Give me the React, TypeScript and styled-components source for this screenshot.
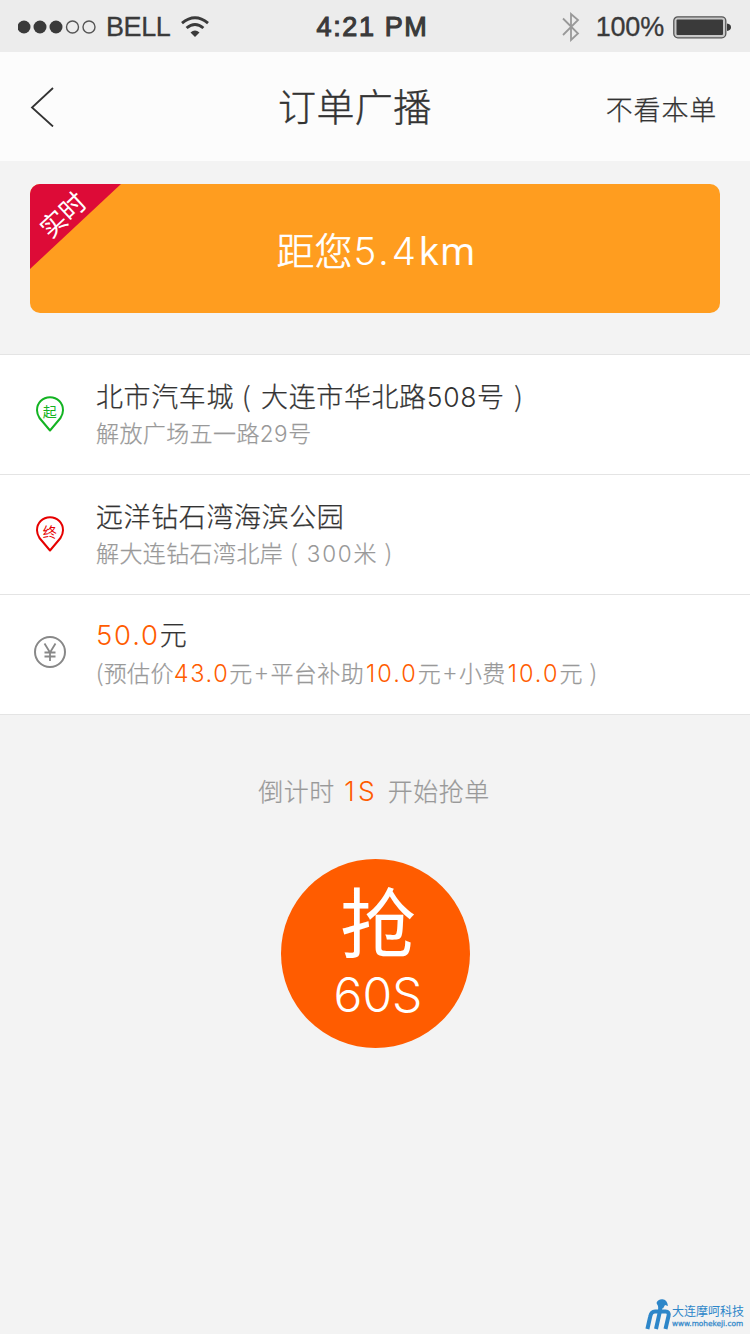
import React from "react";
import styled, { createGlobalStyle } from "styled-components";

const GlobalStyle = createGlobalStyle`
  * { box-sizing: border-box; }
  body { margin: 0; background: #f3f3f3; font-family: "Noto Sans CJK SC", sans-serif; color: #333; }
`;

const Screen = styled.div`
  width: 750px;
  height: 1334px;
  display: flex;
  flex-direction: column;
  background: #f3f3f3;
  overflow: hidden;
  white-space: nowrap;
`;

const StatusBar = styled.div`
  height: 52px;
  flex: none;
  background: #ececec;
  display: grid;
  grid-template-columns: 1fr auto 1fr;
  align-items: center;
  padding: 2px 19px 0 18px;
  font-family: "Liberation Sans", sans-serif;
  color: #3a3a3a;
`;

const StatusGroup = styled.div<{ $end?: boolean }>`
  display: flex;
  align-items: center;
  justify-content: ${(p) => (p.$end ? "flex-end" : "flex-start")};
`;

const StatusText = styled.span<{ $bold?: boolean; $spacing?: number }>`
  font-size: 27px;
  line-height: 32px;
  letter-spacing: ${(p) => p.$spacing ?? 0}px;
  padding-right: ${(p) => (p.$bold ? 4 : 0)}px;
  -webkit-text-stroke: ${(p) => (p.$bold ? 1.1 : 0.3)}px #3a3a3a;
`;

const Spacer = styled.span<{ $w: number }>`
  flex: none;
  width: ${(p) => p.$w}px;
`;

const NavBar = styled.header`
  height: 109px;
  flex: none;
  background: #fcfcfc;
  display: grid;
  grid-template-columns: 248px 1fr auto;
  align-items: center;
  padding: 0 33px 0 30px;
`;

const BackButton = styled.button`
  border: 0;
  padding: 0;
  background: none;
  display: flex;
  justify-self: start;
`;

const Title = styled.h1`
  margin: 0;
  padding-bottom: 4px;
  font-size: 38px;
  font-weight: 300;
  letter-spacing: 0.4px;
  line-height: 56px;
  -webkit-text-stroke: 0.4px currentColor;
`;

const SkipButton = styled.button`
  border: 0;
  padding: 4px 0 0;
  background: none;
  justify-self: end;
  font: 300 27px/40px "Noto Sans CJK SC", sans-serif;
  letter-spacing: 0.8px;
  color: #333;
  -webkit-text-stroke: 0.25px currentColor;
`;

const Banner = styled.section`
  position: relative;
  height: 129px;
  flex: none;
  margin: 23px 30px 41px;
  padding-left: 3px;
  border-radius: 10px;
  background: #ff9d1f;
  color: #fff;
  overflow: hidden;
  display: flex;
  align-items: center;
  justify-content: center;
  font-size: 38px;
  font-weight: 300;
`;

const Distance = styled.span`
  -webkit-text-stroke: 0.6px currentColor;
`;

const Unit = styled.span`
  font-family: "Open Sans", sans-serif;
  font-weight: 400;
  letter-spacing: 1.3px;
  -webkit-text-stroke: 0.2px currentColor;
`;

const Ribbon = styled.div`
  position: absolute;
  left: 0;
  top: 0;
  width: 91px;
  height: 85px;
  &::before {
    content: "";
    display: block;
    height: 100%;
    background: #dd0b37;
    clip-path: polygon(0 0, 100% 0, 0 100%);
  }
`;

const RibbonText = styled.span`
  position: absolute;
  left: 5px;
  top: 11px;
  width: 54px;
  text-align: center;
  font-size: 26px;
  font-weight: 400;
  line-height: 38px;
  transform: rotate(-43deg);
`;

const Num = styled.span<{ $size: number; $spacing?: number; $accent?: boolean; $lead?: number }>`
  font-family: Inter, sans-serif;
  font-weight: 300;
  font-size: ${(p) => p.$size}px;
  letter-spacing: ${(p) => p.$spacing ?? 0}px;
  padding-left: ${(p) => p.$lead ?? 0}px;
  -webkit-text-stroke: 0;
  ${(p) => p.$accent && "color: #ff5c00;"}
`;

const InfoList = styled.section`
  flex: none;
  border-top: 1px solid #e4e4e4;
  background: #fff;
`;

const InfoRow = styled.div`
  height: 120px;
  display: flex;
  border-bottom: 1px solid #e4e4e4;
`;

const IconCell = styled.div`
  width: 96px;
  flex: none;
  padding: 41px 0 0 34px;
`;

const Lines = styled.div<{ $loose?: boolean }>`
  display: flex;
  flex-direction: column;
  gap: ${(p) => (p.$loose ? 3 : 1)}px;
  padding-top: ${(p) => (p.$loose ? 19 : 21)}px;
`;

const Primary = styled.div`
  font-size: 27px;
  line-height: 40px;
  height: 38px;
  font-weight: 300;
  letter-spacing: 0.6px;
  -webkit-text-stroke: 0.25px currentColor;
`;

const Secondary = styled.div`
  font-size: 23px;
  line-height: 34px;
  height: 34px;
  font-weight: 300;
  letter-spacing: 0.4px;
  color: #999;
  -webkit-text-stroke: 0.25px currentColor;
`;

const Gap = styled.span<{ $l: number; $r: number }>`
  padding: 0 ${(p) => p.$r}px 0 ${(p) => p.$l}px;
`;

const Countdown = styled.p`
  margin: 56px 0 0;
  padding-right: 2px;
  height: 38px;
  line-height: 38px;
  flex: none;
  display: flex;
  justify-content: center;
  align-items: baseline;
  gap: 9.5px;
  font-size: 25px;
  font-weight: 300;
  letter-spacing: 0.5px;
  color: #999;
  -webkit-text-stroke: 0.2px currentColor;
`;

const GrabButton = styled.button`
  width: 189px;
  height: 189px;
  flex: none;
  margin: 50px 0 0 281px;
  padding: 20px 0 0 5px;
  border: 0;
  border-radius: 50%;
  background: #ff5c00;
  color: #fff;
  display: flex;
  flex-direction: column;
  align-items: center;
  justify-content: flex-start;
`;

const GrabLabel = styled.span`
  font: 400 76px/80px "Noto Sans CJK SC", sans-serif;
`;

const GrabSeconds = styled.span`
  font: 300 48px/58px Inter, sans-serif;
  padding-top: 7px;
`;

const Footer = styled.footer`
  margin-top: auto;
  display: flex;
  justify-content: flex-end;
  padding: 0 6px 4px 0;
  color: #2d86c9;
`;

const Brand = styled.div`
  display: flex;
  flex-direction: column;
  padding-top: 4px;
`;

const BrandName = styled.span`
  font-size: 12px;
  line-height: 16px;
`;

const BrandUrl = styled.span`
  font: 400 7.35px/9px "DejaVu Sans", sans-serif;
  -webkit-text-stroke: 0.25px currentColor;
`;

function SignalDots() {
  return (
    <svg width="88" height="16" viewBox="0 0 88 16">
      {[6, 22, 38].map((x) => <circle key={x} cx={x} cy="8" r="6.5" fill="#3a3a3a" />)}
      {[54.5, 71].map((x) => <circle key={x} cx={x} cy="8" r="6" fill="none" stroke="#555" strokeWidth="1.4" />)}
    </svg>
  );
}

function Wifi() {
  return (
    <svg width="28" height="22" viewBox="0 0 28 22" fill="none" stroke="#3a3a3a" strokeWidth="2.9">
      <path d="M1 7.2Q14-3.6 27 7.2" />
      <path d="M5.6 12Q14 4.8 22.4 12" />
      <path d="M9.5 16.5Q14 12.3 18.5 16.5L14 21Z" fill="#3a3a3a" stroke="none" />
    </svg>
  );
}

function Bluetooth() {
  return (
    <svg width="18" height="30" viewBox="0 0 18 30" fill="none" stroke="#999" strokeWidth="1.8">
      <path d="M1 6.5L16 21.5L9 28V2L16 8L1 23" />
    </svg>
  );
}

function Battery() {
  return (
    <svg width="58" height="23" viewBox="0 0 58 23">
      <rect x=".8" y=".8" width="52" height="21" rx="4" fill="#c8c8c8" stroke="#555" strokeWidth="1.3" />
      <rect x="3.5" y="3.5" width="46.5" height="15.5" rx="1" fill="#3a3a3a" />
      <path d="M54 7.5Q58 8 58 11.3T54 15Z" fill="#3a3a3a" />
    </svg>
  );
}

function Pin({ color, label }: { color: string; label: string }) {
  return (
    <svg width="32" height="38" viewBox="0 0 32 38">
      <path d="M16 34.5L5.5 22C4 19.5 3 17 3 14.2C3 7 8.5 1.2 16 1.2S29 7 29 14.2C29 17 28 19.5 26.5 22Z" fill="none" stroke={color} strokeWidth="2" strokeLinejoin="round" />
      <text x="15.8" y="21.3" textAnchor="middle" fontSize="14" fill={color}>{label}</text>
    </svg>
  );
}

function YuanIcon() {
  return (
    <svg width="32" height="32" viewBox="0 0 32 32" fill="none" stroke="#888">
      <circle cx="16" cy="16" r="15" strokeWidth="2" />
      <path d="M10.5 7.5L16 16.5L21.5 7.5M16 16V25M10.5 16.5H21.5M10.5 20.5H21.5" strokeWidth="1.8" />
    </svg>
  );
}

function BrandLogo() {
  return (
    <svg width="27" height="31" viewBox="0 0 27 31" fill="none" stroke="#2d86c9" strokeWidth="4">
      <path d="M2.4 30L5.2 17.5Q6.200 12.500 10 12.500H20.500Q24.500 12.500 23.500 17L20.500 30" />
      <path d="M11 30L15 12Q15.500 8 15 5" />
      <path d="M11.500 4Q13 0 17.500 0.300Q22 0.500 23 7L20 6L18 9.500L14 9Z" fill="#2d86c9" stroke="none" />
    </svg>
  );
}

export default function App() {
  return (
    <>
      <GlobalStyle />
      <Screen>
        <StatusBar>
          <StatusGroup>
            <SignalDots />
            <StatusText $spacing={-0.4}>BELL</StatusText>
            <Spacer $w={11} />
            <Wifi />
          </StatusGroup>
          <StatusText $bold $spacing={1.6}>4:21 PM</StatusText>
          <StatusGroup $end>
            <Bluetooth />
            <Spacer $w={16} />
            <StatusText $spacing={-0.2}>100%</StatusText>
            <Spacer $w={9} />
            <Battery />
          </StatusGroup>
        </StatusBar>

        <NavBar>
          <BackButton aria-label="返回">
            <svg width="25" height="40" viewBox="0 0 25 40" fill="none" stroke="#333" strokeWidth="1.8">
              <path d="M23 1L2 20.5L23 39.5" />
            </svg>
          </BackButton>
          <Title>订单广播</Title>
          <SkipButton>不看本单</SkipButton>
        </NavBar>

        <Banner>
          <Ribbon><RibbonText>实时</RibbonText></Ribbon>
          <Distance>距您<Num $size={38.5} $spacing={2.8} $lead={1}>5.4</Num><Unit>km</Unit></Distance>
        </Banner>

        <InfoList>
          <InfoRow>
            <IconCell><Pin color="#13b322" label="起" /></IconCell>
            <Lines>
              <Primary>北市汽车城<Gap $l={8} $r={10}>(</Gap>大连市华北路<Num $size={26.5} $spacing={0.7}>508</Num>号<Gap $l={9.5} $r={0}>)</Gap></Primary>
              <Secondary>解放广场五一路<Num $size={22.5} $spacing={0.5}>29</Num>号</Secondary>
            </Lines>
          </InfoRow>
          <InfoRow>
            <IconCell><Pin color="#e60000" label="终" /></IconCell>
            <Lines>
              <Primary>远洋钻石湾海滨公园</Primary>
              <Secondary>解大连钻石湾北岸<Gap $l={7} $r={9}>(</Gap><Num $size={22.5} $spacing={1.7}>300</Num>米<Gap $l={8} $r={0}>)</Gap></Secondary>
            </Lines>
          </InfoRow>
          <InfoRow>
            <IconCell><YuanIcon /></IconCell>
            <Lines $loose>
              <Primary><Num $accent $size={27.5} $spacing={1.8}>50.0</Num>元</Primary>
              <Secondary>(预估价<Num $accent $size={23.5} $spacing={1.6}>43.0</Num>元<Gap $l={2.5} $r={2.5}>+</Gap>平台补助<Num $accent $size={23.5} $spacing={2} $lead={2}>10.0</Num>元<Gap $l={2.5} $r={2.5}>+</Gap>小费<Num $accent $size={23.5} $spacing={2} $lead={2}>10.0</Num>元<Gap $l={7} $r={0}>)</Gap></Secondary>
            </Lines>
          </InfoRow>
        </InfoList>

        <Countdown>
          <span>倒计时</span>
          <Num $accent $size={26.5} $spacing={3.5}>1S</Num>
          <span>开始抢单</span>
        </Countdown>

        <GrabButton>
          <GrabLabel>抢</GrabLabel>
          <GrabSeconds>60S</GrabSeconds>
        </GrabButton>

        <Footer>
          <BrandLogo />
          <Brand>
            <BrandName>大连摩呵科技</BrandName>
            <BrandUrl>www.mohekeji.com</BrandUrl>
          </Brand>
        </Footer>
      </Screen>
    </>
  );
}
